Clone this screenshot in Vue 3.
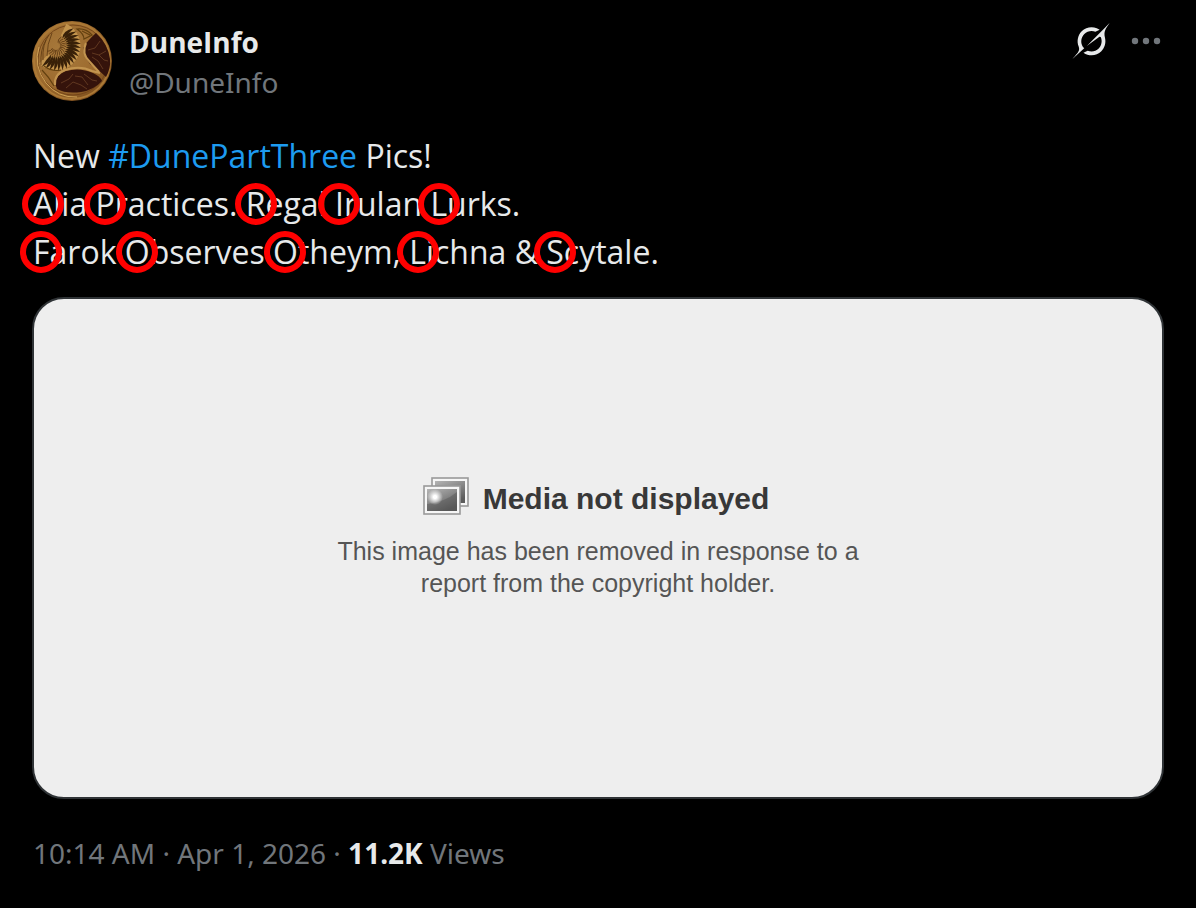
<template>
    <article class="post">
        <header class="post-header">
            <a class="avatar" href="#" aria-label="DuneInfo">
                <svg viewBox="0 0 80 80" width="80" height="80">
                    <defs>
                        <radialGradient id="coin" cx="38%" cy="38%" r="65%">
                            <stop offset="0" stop-color="#a87a3c" />
                            <stop offset="0.7" stop-color="#9c6a2e" />
                            <stop offset="1" stop-color="#80511f" />
                        </radialGradient>
                    </defs>
                    <circle cx="40" cy="40" r="40" fill="url(#coin)" />
                    <circle cx="40" cy="40" r="38" fill="none" stroke="#ab7936" stroke-width="2" />
                    <circle cx="41" cy="39" r="35" fill="none" stroke="#754619" stroke-width="1" />
                    <!-- 深色翼面 -->
                    <path d="M51 27Q55 20 64 12Q76 23 78 38Q79 47 74 56Q66 48 58 43Q52 36 51 27Z" fill="#35130b" />
                    <path d="M23 62Q25 53 34 50Q48 46 61 52Q68 55 70 60Q62 69 49 71Q34 73 25 68Z" fill="#35130b" />
                    <path d="M54 22Q49 33 58 41L67 51M23 64Q22 53 33 49Q48 44 60 50L68 52" fill="none" stroke="#c2944f" stroke-width="2" />
                    <path
                        d="M56 29L63 27L68 20M60 32L67 34L74 30M60 36L66 40L71 48M67 34L72 39L76 40M29 62L37 58L41 53M34 67L41 61L49 64L55 68M43 55L50 56L56 64M52 53L60 59L65 60"
                        fill="none" stroke="#74472a" stroke-width="0.7" />
                    <!-- 羽毛 -->
                    <circle cx="24" cy="25" r="18" fill="none" stroke="#c2934c" stroke-width="13" stroke-dasharray="62 52"
                        transform="rotate(-65 24 25)" />
                    <g fill="#382008">
                        <path v-for="angle in featherAngles" :key="angle" :transform="`rotate(${angle} 24 25)`"
                            d="M34 25Q40 20 49 27Q41 27 34 25Z" />
                    </g>
                    <g fill="none" stroke="#5d3812" stroke-width="0.8">
                        <path v-for="angle in innerAngles" :key="angle" :transform="`rotate(${angle} 24 25)`"
                            d="M28 25Q31 23 34 25" />
                        <path d="M17 14Q10 23 11 39M14 19Q8 28 9 44M20 12Q15 23 15 35" />
                    </g>
                    <path d="M45 8Q54 7 60 14L52 18Q52 13 45 8ZM50 10L58 14M10 49Q17 56 22 65M12 45Q20 51 29 49" fill="none" stroke="#63400f"
                        stroke-width="1.2" />
                    <path d="M7 26Q1 45 14 62Q26 77 45 76" fill="none" stroke="#cda055" stroke-width="1" />
                </svg>
            </a>
            <div class="names">
                <a class="name" href="#">DuneInfo</a>
                <a class="handle" href="#">@DuneInfo</a>
            </div>
            <div class="actions">
                <button type="button" class="icon-button" aria-label="Grok">
                    <svg viewBox="0 0 33 32" width="38" height="36" fill="#e7e9ea">
                        <path
                            d="M12.745 20.54l10.97-8.19c.539-.4 1.307-.244 1.564.38 1.349 3.288.746 7.241-1.938 9.955-2.683 2.714-6.417 3.31-9.83 1.954l-3.728 1.745c5.347 3.697 11.84 2.782 15.898-1.324 3.219-3.255 4.216-7.692 3.284-11.693l.008.009c-1.351-5.878.332-8.227 3.782-13.031L33 0l-4.54 4.59v-.014L12.743 20.544m-2.263 1.987c-3.837-3.707-3.175-9.446.1-12.755 2.42-2.449 6.388-3.448 9.852-1.979l3.72-1.737c-.67-.49-1.53-1.017-2.515-1.387-4.455-1.854-9.789-.931-13.41 2.728-3.483 3.523-4.579 8.94-2.697 13.561 1.405 3.454-.899 5.898-3.22 8.364C1.49 30.2.666 31.074 0 32l10.478-9.466" />
                    </svg>
                </button>
                <button type="button" class="icon-button" aria-label="More">
                    <svg viewBox="0 0 30 36" width="30" height="36" fill="#71767b">
                        <circle cx="4" cy="18" r="3.2" />
                        <circle cx="15" cy="18" r="3.2" />
                        <circle cx="26" cy="18" r="3.2" />
                    </svg>
                </button>
            </div>
        </header>

        <div class="post-text">
            <p>New <a class="hashtag" href="#">#DunePartThree</a> Pics!</p>
            <p v-for="(line, i) in lines" :key="i">
                <template v-for="(word, j) in line" :key="j">
                    <template v-if="word === '&'">{{ word }}</template>
                    <template v-else><span class="marked">{{ word[0] }}</span>{{ word.slice(1) }}</template>
                    {{ ' ' }}
                </template>
            </p>
        </div>

        <div class="media">
            <div class="media-title">
                <svg viewBox="0 0 46 38" width="46" height="38">
                    <defs>
                        <linearGradient id="photo" x1="0" y1="0" x2="0.6" y2="1">
                            <stop offset="0" stop-color="#b5b5b5" />
                            <stop offset="0.5" stop-color="#8a8a8a" />
                            <stop offset="1" stop-color="#5c5c5c" />
                        </linearGradient>
                        <radialGradient id="glow">
                            <stop offset="0.2" stop-color="#fff" />
                            <stop offset="1" stop-color="#fff" stop-opacity="0" />
                        </radialGradient>
                    </defs>
                    <rect x="9" y="1" width="36" height="28" fill="#f6f6f6" stroke="#999" stroke-width="1.6" />
                    <rect x="12" y="4" width="30" height="22" fill="url(#photo)" />
                    <rect x="1" y="9" width="36" height="28" fill="#f6f6f6" stroke="#999" stroke-width="1.6" />
                    <rect x="4" y="12" width="30" height="22" fill="url(#photo)" />
                    <path d="M4 27Q22 25 34 15V34H4Z" fill="#555" opacity="0.45" />
                    <circle cx="12" cy="20" r="8" fill="url(#glow)" />
                </svg>
                <strong>Media not displayed</strong>
            </div>
            <p class="media-note">This image has been removed in response to a report from the copyright holder.</p>
        </div>

        <footer class="post-footer">
            <a href="#">10:14 AM · Apr 1, 2026</a> · <strong>11.2K</strong> Views
        </footer>
    </article>
</template>

<script setup>
const lines = [
    ['Alia', 'Practices.', 'Regal', 'Irulan', 'Lurks.'],
    ['Farok', 'Observes', 'Otheym,', 'Lichna', '&', 'Scytale.']
];

// 羽毛绕中心点排列的角度
const featherAngles = Array.from({ length: 18 }, (_, i) => -50 + i * 10);
const innerAngles = Array.from({ length: 14 }, (_, i) => -60 + i * 16);
</script>

<style>
body {
    margin: 0;
    background: #000;
}
</style>

<style scoped>
.post {
    box-sizing: border-box;
    padding: 21px 32px 32px;
    background: #000;
    color: #e7e9ea;
    font-family: "Open Sans", "Noto Sans", sans-serif;
}

a {
    color: inherit;
    text-decoration: none;
}

p {
    margin: 0;
}

.post-header {
    display: flex;
    align-items: flex-start;
}

.avatar,
.avatar svg {
    display: block;
}

.names {
    display: flex;
    flex-direction: column;
    flex: 1;
    margin-left: 17px;
    padding-top: 1px;
    font-size: 28px;
    line-height: 40px;
}

.name {
    font-weight: 700;
}

.handle {
    color: #71767b;
    font-family: "Noto Sans", sans-serif;
}

.actions {
    display: flex;
    gap: 21px;
    padding: 2px 3px 0 0;
}

.icon-button {
    padding: 0;
    border: none;
    background: none;
    cursor: pointer;
}

.icon-button svg {
    display: block;
}

.post-text {
    margin-top: 30px;
    padding: 0 1px;
    font-size: 32px;
    line-height: 48px;
}

.hashtag {
    color: #1d9bf0;
}

.marked {
    position: relative;
}

.marked::after {
    content: "";
    position: absolute;
    top: 50%;
    left: 50%;
    width: 30px;
    height: 30px;
    border: 6px solid #f00;
    border-radius: 50%;
    transform: translate(-50%, -50%);
}

.media {
    display: flex;
    flex-direction: column;
    align-items: center;
    justify-content: center;
    box-sizing: border-box;
    min-height: 502px;
    margin-top: 21px;
    padding: 32px 32px 52px;
    border: 2px solid #2f3336;
    border-radius: 32px;
    background: #eee;
    color: #383838;
    font-family: "Liberation Sans", Arial, sans-serif;
}

.media-title {
    display: flex;
    align-items: flex-start;
    gap: 14px;
    margin-right: 4px;
    font-size: 30px;
    line-height: 44px;
}

.media-note {
    max-width: 560px;
    margin-top: 14px;
    color: #555;
    font-size: 25px;
    line-height: 32px;
    text-align: center;
}

.post-footer {
    margin-top: 34px;
    padding: 0 1px;
    color: #71767b;
    font-family: "Noto Sans", sans-serif;
    font-size: 28px;
    line-height: 40px;
}

.post-footer strong {
    color: #e7e9ea;
}
</style>
